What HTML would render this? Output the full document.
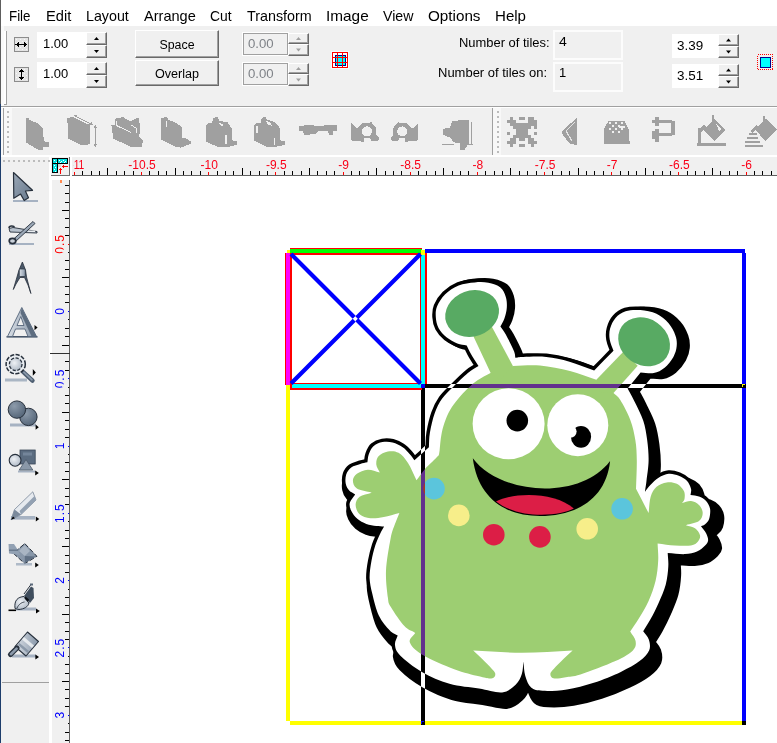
<!DOCTYPE html><html><head><meta charset="utf-8"><title>Tiler</title><style>html,body{margin:0;padding:0;background:#f0f0f0;}
body{width:777px;height:743px;overflow:hidden;font-family:"Liberation Sans",sans-serif;}
#app{position:relative;width:777px;height:743px;background:#f0f0f0;overflow:hidden;}
#app div,#app span{position:absolute;box-sizing:border-box;white-space:nowrap;}
#cv{position:absolute;left:0;top:0;}
.menubar{left:0;top:0;width:777px;height:26px;background:#fff;}
.mi{top:6px;font-size:15px;line-height:18px;color:#000;transform-origin:0 50%;}
.edgeA{left:0;top:0;width:1px;height:104px;background:#5e5e5e;}
.edgeB{left:0;top:104px;width:1px;height:639px;background:#1d3d6b;}
.edgeW{left:1px;top:26px;width:3px;height:80px;background:#fafafa;}
.sepG{left:1px;top:106px;width:776px;height:1px;background:#a0a0a0;}
.sepW{left:1px;top:107px;width:776px;height:1px;background:#fff;}
.grip1{left:4px;top:31px;width:3px;height:74px;border-right:1px solid #a0a0a0;border-bottom:1px solid #a0a0a0;background:#fff;}
.inp{background:#fff;font-size:12px;line-height:14px;color:#000;}
.inp span{left:7px;}
.lbl{font-size:12px;line-height:14px;color:#000;transform-origin:100% 50%;}
.btn{background:#f0f0f0;border-top:1px solid #fff;border-left:1px solid #fff;border-right:1px solid #696969;border-bottom:1px solid #696969;font-size:12px;line-height:14px;text-align:center;}
.btn:after{content:"";position:absolute;left:0;top:0;right:0;bottom:0;border-right:1px solid #a0a0a0;border-bottom:1px solid #a0a0a0;}
.btn span{left:0;width:100%;text-align:center;transform-origin:50% 50%;}
.sp{background:#f0f0f0;border-top:1px solid #fff;border-left:1px solid #fff;border-right:1px solid #696969;border-bottom:1px solid #696969;}
.sp:after{content:"";position:absolute;left:0;top:0;right:0;bottom:0;border-right:1px solid #a0a0a0;border-bottom:1px solid #a0a0a0;}
.dis{background:#f0f0f0;border:1px solid #a0a0a0;outline:1px solid #fff;font-size:12px;line-height:14px;color:#7f8388;}
.dsp{background:#f0f0f0;border-top:1px solid #fff;border-left:1px solid #fff;border-right:1px solid #a0a0a0;border-bottom:1px solid #a0a0a0;}
.fld{background:#f0f0f0;border:2px solid #fcfcfc;font-size:12px;line-height:14px;color:#000;}
</style></head><body>
<div id="app">
<div class="menubar"></div>
<span class="mi" style="left:8.7px;top:7.0px;font-size:15px;transform:scaleX(0.8895);transform-origin:0 50%;">File</span>
<span class="mi" style="left:45.9px;top:7.0px;font-size:15px;transform:scaleX(0.9784);transform-origin:0 50%;">Edit</span>
<span class="mi" style="left:85.8px;top:7.0px;font-size:15px;transform:scaleX(0.9501);transform-origin:0 50%;">Layout</span>
<span class="mi" style="left:143.5px;top:7.0px;font-size:15px;transform:scaleX(0.9705);transform-origin:0 50%;">Arrange</span>
<span class="mi" style="left:210.2px;top:7.0px;font-size:15px;transform:scaleX(0.9253);transform-origin:0 50%;">Cut</span>
<span class="mi" style="left:246.5px;top:7.0px;font-size:15px;transform:scaleX(0.9543);transform-origin:0 50%;">Transform</span>
<span class="mi" style="left:326.3px;top:7.0px;font-size:15px;transform:scaleX(1.0239);transform-origin:0 50%;">Image</span>
<span class="mi" style="left:382.5px;top:7.0px;font-size:15px;transform:scaleX(0.9457);transform-origin:0 50%;">View</span>
<span class="mi" style="left:428.0px;top:7.0px;font-size:15px;transform:scaleX(1.0154);transform-origin:0 50%;">Options</span>
<span class="mi" style="left:494.5px;top:7.0px;font-size:15px;transform:scaleX(1.0046);transform-origin:0 50%;">Help</span>
<div class="edgeW"></div>
<div class="sepG"></div><div class="sepW"></div>
<div class="grip1"></div>
<div class="inp" style="left:37px;top:32px;width:49px;height:26px"><span style="left:6px;top:5px;transform:scaleX(1.08);transform-origin:0 50%">1.00</span></div>
<div class="inp" style="left:37px;top:62px;width:49px;height:26px"><span style="left:6px;top:5px;transform:scaleX(1.08);transform-origin:0 50%">1.00</span></div>
<div class="sp" style="left:86px;top:32px;width:21px;height:13px"><svg width="21" height="13" style="position:absolute;left:0;top:0"><path d="M7.0 7.0 l5 0 l-2.5 -3 z" fill="#000"/></svg></div><div class="sp" style="left:86px;top:45px;width:21px;height:13px"><svg width="21" height="13" style="position:absolute;left:0;top:0"><path d="M7.0 4.0 l5 0 l-2.5 3 z" fill="#000"/></svg></div>
<div class="sp" style="left:86px;top:62px;width:21px;height:13px"><svg width="21" height="13" style="position:absolute;left:0;top:0"><path d="M7.0 7.0 l5 0 l-2.5 -3 z" fill="#000"/></svg></div><div class="sp" style="left:86px;top:75px;width:21px;height:13px"><svg width="21" height="13" style="position:absolute;left:0;top:0"><path d="M7.0 4.0 l5 0 l-2.5 3 z" fill="#000"/></svg></div>
<div class="btn" style="left:135px;top:30px;width:84px;height:28px"><span style="top:7px;transform:scaleX(1.03)">Space</span></div>
<div class="btn" style="left:135px;top:60px;width:84px;height:26px"><span style="top:6px;transform:scaleX(1.05)">Overlap</span></div>
<div class="dis" style="left:243px;top:33px;width:45px;height:22px"><span style="left:4px;top:2.5px;transform:scaleX(1.1);transform-origin:0 50%">0.00</span></div>
<div class="dis" style="left:243px;top:63px;width:45px;height:22px"><span style="left:4px;top:3px;transform:scaleX(1.1);transform-origin:0 50%">0.00</span></div>
<div class="sp" style="left:288px;top:33px;width:21px;height:11px"><svg width="21" height="11" style="position:absolute;left:0;top:0"><path d="M7.0 6.0 l5 0 l-2.5 -3 z" fill="#a0a0a0"/></svg></div><div class="sp" style="left:288px;top:44px;width:21px;height:12px"><svg width="21" height="12" style="position:absolute;left:0;top:0"><path d="M7.0 3.5 l5 0 l-2.5 3 z" fill="#a0a0a0"/></svg></div>
<div class="sp" style="left:288px;top:63px;width:21px;height:11px"><svg width="21" height="11" style="position:absolute;left:0;top:0"><path d="M7.0 6.0 l5 0 l-2.5 -3 z" fill="#a0a0a0"/></svg></div><div class="sp" style="left:288px;top:74px;width:21px;height:12px"><svg width="21" height="12" style="position:absolute;left:0;top:0"><path d="M7.0 3.5 l5 0 l-2.5 3 z" fill="#a0a0a0"/></svg></div>
<span class="lbl" style="left:458.8px;top:36.0px;font-size:12px;transform:scaleX(1.0782);transform-origin:0 50%;">Number of tiles:</span>
<span class="lbl" style="left:438.4px;top:66.0px;font-size:12px;transform:scaleX(1.0822);transform-origin:0 50%;">Number of tiles on:</span>
<div class="fld" style="left:553px;top:30px;width:70px;height:30px"><span style="left:3.5px;top:2.5px;font-size:13px;transform:scaleX(1.08);transform-origin:0 50%">4</span></div>
<div class="fld" style="left:553px;top:62px;width:70px;height:30px"><span style="left:4px;top:1.5px;font-size:13px">1</span></div>
<div class="inp" style="left:672px;top:34px;width:46px;height:24px"><span style="left:5px;top:5px;transform:scaleX(1.12);transform-origin:0 50%">3.39</span></div>
<div class="inp" style="left:672px;top:64px;width:46px;height:24px"><span style="left:5px;top:5px;transform:scaleX(1.12);transform-origin:0 50%">3.51</span></div>
<div class="sp" style="left:718px;top:34px;width:21px;height:12px"><svg width="21" height="12" style="position:absolute;left:0;top:0"><path d="M7.0 6.5 l5 0 l-2.5 -3 z" fill="#000"/></svg></div><div class="sp" style="left:718px;top:46px;width:21px;height:12px"><svg width="21" height="12" style="position:absolute;left:0;top:0"><path d="M7.0 3.5 l5 0 l-2.5 3 z" fill="#000"/></svg></div>
<div class="sp" style="left:718px;top:64px;width:21px;height:12px"><svg width="21" height="12" style="position:absolute;left:0;top:0"><path d="M7.0 6.5 l5 0 l-2.5 -3 z" fill="#000"/></svg></div><div class="sp" style="left:718px;top:76px;width:21px;height:12px"><svg width="21" height="12" style="position:absolute;left:0;top:0"><path d="M7.0 3.5 l5 0 l-2.5 3 z" fill="#000"/></svg></div>
<div class="edgeA"></div><div class="edgeB"></div>
<svg id="cv" width="777" height="743" viewBox="0 0 777 743">
<rect x="1" y="155" width="776" height="2" fill="#fff"/>
<rect x="49" y="155" width="728" height="588" fill="#fff"/>
<rect x="51" y="157" width="19" height="19" fill="#f0f0f0"/>
<rect x="69" y="157" width="1" height="19" fill="#707070"/><rect x="51" y="175" width="19" height="1" fill="#707070"/>
<rect x="72" y="157" width="705" height="19" fill="#f0f0f0"/>
<rect x="72" y="175" width="705" height="1" fill="#606060"/>
<rect x="52" y="180" width="18" height="563" fill="#f0f0f0"/>
<rect x="69" y="180" width="1" height="563" fill="#606060"/>
<rect x="74" y="172" width="1" height="3" fill="#ff0000"/>
<rect x="82" y="171" width="1" height="4" fill="#000"/>
<rect x="91" y="171" width="1" height="4" fill="#000"/>
<rect x="99" y="171" width="1" height="4" fill="#000"/>
<rect x="107" y="168" width="1" height="7" fill="#000"/>
<rect x="116" y="171" width="1" height="4" fill="#000"/>
<rect x="124" y="171" width="1" height="4" fill="#000"/>
<rect x="133" y="171" width="1" height="4" fill="#000"/>
<rect x="141" y="172" width="1" height="3" fill="#ff0000"/>
<rect x="149" y="171" width="1" height="4" fill="#000"/>
<rect x="158" y="171" width="1" height="4" fill="#000"/>
<rect x="166" y="171" width="1" height="4" fill="#000"/>
<rect x="175" y="168" width="1" height="7" fill="#000"/>
<rect x="183" y="171" width="1" height="4" fill="#000"/>
<rect x="191" y="171" width="1" height="4" fill="#000"/>
<rect x="200" y="171" width="1" height="4" fill="#000"/>
<rect x="208" y="172" width="1" height="3" fill="#ff0000"/>
<rect x="217" y="171" width="1" height="4" fill="#000"/>
<rect x="225" y="171" width="1" height="4" fill="#000"/>
<rect x="233" y="171" width="1" height="4" fill="#000"/>
<rect x="242" y="168" width="1" height="7" fill="#000"/>
<rect x="250" y="171" width="1" height="4" fill="#000"/>
<rect x="259" y="171" width="1" height="4" fill="#000"/>
<rect x="267" y="171" width="1" height="4" fill="#000"/>
<rect x="275" y="172" width="1" height="3" fill="#ff0000"/>
<rect x="284" y="171" width="1" height="4" fill="#000"/>
<rect x="292" y="171" width="1" height="4" fill="#000"/>
<rect x="301" y="171" width="1" height="4" fill="#000"/>
<rect x="309" y="168" width="1" height="7" fill="#000"/>
<rect x="317" y="171" width="1" height="4" fill="#000"/>
<rect x="326" y="171" width="1" height="4" fill="#000"/>
<rect x="334" y="171" width="1" height="4" fill="#000"/>
<rect x="343" y="172" width="1" height="3" fill="#ff0000"/>
<rect x="351" y="171" width="1" height="4" fill="#000"/>
<rect x="359" y="171" width="1" height="4" fill="#000"/>
<rect x="368" y="171" width="1" height="4" fill="#000"/>
<rect x="376" y="168" width="1" height="7" fill="#000"/>
<rect x="385" y="171" width="1" height="4" fill="#000"/>
<rect x="393" y="171" width="1" height="4" fill="#000"/>
<rect x="401" y="171" width="1" height="4" fill="#000"/>
<rect x="410" y="172" width="1" height="3" fill="#ff0000"/>
<rect x="418" y="171" width="1" height="4" fill="#000"/>
<rect x="426" y="171" width="1" height="4" fill="#000"/>
<rect x="435" y="171" width="1" height="4" fill="#000"/>
<rect x="443" y="168" width="1" height="7" fill="#000"/>
<rect x="452" y="171" width="1" height="4" fill="#000"/>
<rect x="460" y="171" width="1" height="4" fill="#000"/>
<rect x="468" y="171" width="1" height="4" fill="#000"/>
<rect x="477" y="172" width="1" height="3" fill="#ff0000"/>
<rect x="485" y="171" width="1" height="4" fill="#000"/>
<rect x="494" y="171" width="1" height="4" fill="#000"/>
<rect x="502" y="171" width="1" height="4" fill="#000"/>
<rect x="510" y="168" width="1" height="7" fill="#000"/>
<rect x="519" y="171" width="1" height="4" fill="#000"/>
<rect x="527" y="171" width="1" height="4" fill="#000"/>
<rect x="536" y="171" width="1" height="4" fill="#000"/>
<rect x="544" y="172" width="1" height="3" fill="#ff0000"/>
<rect x="552" y="171" width="1" height="4" fill="#000"/>
<rect x="561" y="171" width="1" height="4" fill="#000"/>
<rect x="569" y="171" width="1" height="4" fill="#000"/>
<rect x="578" y="168" width="1" height="7" fill="#000"/>
<rect x="586" y="171" width="1" height="4" fill="#000"/>
<rect x="594" y="171" width="1" height="4" fill="#000"/>
<rect x="603" y="171" width="1" height="4" fill="#000"/>
<rect x="611" y="172" width="1" height="3" fill="#ff0000"/>
<rect x="620" y="171" width="1" height="4" fill="#000"/>
<rect x="628" y="171" width="1" height="4" fill="#000"/>
<rect x="636" y="171" width="1" height="4" fill="#000"/>
<rect x="645" y="168" width="1" height="7" fill="#000"/>
<rect x="653" y="171" width="1" height="4" fill="#000"/>
<rect x="662" y="171" width="1" height="4" fill="#000"/>
<rect x="670" y="171" width="1" height="4" fill="#000"/>
<rect x="678" y="172" width="1" height="3" fill="#ff0000"/>
<rect x="687" y="171" width="1" height="4" fill="#000"/>
<rect x="695" y="171" width="1" height="4" fill="#000"/>
<rect x="704" y="171" width="1" height="4" fill="#000"/>
<rect x="712" y="168" width="1" height="7" fill="#000"/>
<rect x="720" y="171" width="1" height="4" fill="#000"/>
<rect x="729" y="171" width="1" height="4" fill="#000"/>
<rect x="737" y="171" width="1" height="4" fill="#000"/>
<rect x="746" y="172" width="1" height="3" fill="#ff0000"/>
<rect x="754" y="171" width="1" height="4" fill="#000"/>
<rect x="762" y="171" width="1" height="4" fill="#000"/>
<rect x="771" y="171" width="1" height="4" fill="#000"/>
<clipPath id="hrc"><rect x="73.6" y="157" width="705" height="18"/></clipPath>
<g clip-path="url(#hrc)" font-family="Liberation Sans" font-size="12" fill="#fa0018">
<text transform="translate(70.2 169) scale(0.86 1)">-11</text>
<text x="142.0" y="169" text-anchor="middle">-10.5</text>
<text x="209.2" y="169" text-anchor="middle">-10</text>
<text x="276.3" y="169" text-anchor="middle">-9.5</text>
<text x="343.5" y="169" text-anchor="middle">-9</text>
<text x="410.7" y="169" text-anchor="middle">-8.5</text>
<text x="477.9" y="169" text-anchor="middle">-8</text>
<text x="545.1" y="169" text-anchor="middle">-7.5</text>
<text x="612.2" y="169" text-anchor="middle">-7</text>
<text x="679.4" y="169" text-anchor="middle">-6.5</text>
<text x="746.6" y="169" text-anchor="middle">-6</text>
</g>
<rect x="65" y="185" width="4" height="1" fill="#000"/>
<rect x="65" y="193" width="4" height="1" fill="#000"/>
<rect x="65" y="202" width="4" height="1" fill="#000"/>
<rect x="62" y="210" width="7" height="1" fill="#000"/>
<rect x="65" y="218" width="4" height="1" fill="#000"/>
<rect x="65" y="227" width="4" height="1" fill="#000"/>
<rect x="65" y="235" width="4" height="1" fill="#000"/>
<rect x="68" y="244" width="1" height="1" fill="#ff0000"/>
<rect x="68" y="252" width="1" height="1" fill="#000"/>
<rect x="65" y="260" width="4" height="1" fill="#000"/>
<rect x="65" y="269" width="4" height="1" fill="#000"/>
<rect x="62" y="277" width="7" height="1" fill="#000"/>
<rect x="65" y="286" width="4" height="1" fill="#000"/>
<rect x="65" y="294" width="4" height="1" fill="#000"/>
<rect x="65" y="302" width="4" height="1" fill="#000"/>
<rect x="68" y="311" width="1" height="1" fill="#0000ff"/>
<rect x="68" y="319" width="1" height="1" fill="#000"/>
<rect x="65" y="328" width="4" height="1" fill="#000"/>
<rect x="65" y="336" width="4" height="1" fill="#000"/>
<rect x="62" y="345" width="7" height="1" fill="#000"/>
<rect x="65" y="353" width="4" height="1" fill="#000"/>
<rect x="65" y="361" width="4" height="1" fill="#000"/>
<rect x="65" y="370" width="4" height="1" fill="#000"/>
<rect x="68" y="378" width="1" height="1" fill="#0000ff"/>
<rect x="68" y="387" width="1" height="1" fill="#000"/>
<rect x="65" y="395" width="4" height="1" fill="#000"/>
<rect x="65" y="403" width="4" height="1" fill="#000"/>
<rect x="62" y="412" width="7" height="1" fill="#000"/>
<rect x="65" y="420" width="4" height="1" fill="#000"/>
<rect x="65" y="429" width="4" height="1" fill="#000"/>
<rect x="65" y="437" width="4" height="1" fill="#000"/>
<rect x="68" y="446" width="1" height="1" fill="#0000ff"/>
<rect x="68" y="454" width="1" height="1" fill="#000"/>
<rect x="65" y="462" width="4" height="1" fill="#000"/>
<rect x="65" y="471" width="4" height="1" fill="#000"/>
<rect x="62" y="479" width="7" height="1" fill="#000"/>
<rect x="65" y="488" width="4" height="1" fill="#000"/>
<rect x="65" y="496" width="4" height="1" fill="#000"/>
<rect x="65" y="504" width="4" height="1" fill="#000"/>
<rect x="68" y="513" width="1" height="1" fill="#0000ff"/>
<rect x="68" y="521" width="1" height="1" fill="#000"/>
<rect x="65" y="530" width="4" height="1" fill="#000"/>
<rect x="65" y="538" width="4" height="1" fill="#000"/>
<rect x="62" y="546" width="7" height="1" fill="#000"/>
<rect x="65" y="555" width="4" height="1" fill="#000"/>
<rect x="65" y="563" width="4" height="1" fill="#000"/>
<rect x="65" y="572" width="4" height="1" fill="#000"/>
<rect x="68" y="580" width="1" height="1" fill="#0000ff"/>
<rect x="68" y="589" width="1" height="1" fill="#000"/>
<rect x="65" y="597" width="4" height="1" fill="#000"/>
<rect x="65" y="605" width="4" height="1" fill="#000"/>
<rect x="62" y="614" width="7" height="1" fill="#000"/>
<rect x="65" y="622" width="4" height="1" fill="#000"/>
<rect x="65" y="631" width="4" height="1" fill="#000"/>
<rect x="65" y="639" width="4" height="1" fill="#000"/>
<rect x="68" y="647" width="1" height="1" fill="#0000ff"/>
<rect x="68" y="656" width="1" height="1" fill="#000"/>
<rect x="65" y="664" width="4" height="1" fill="#000"/>
<rect x="65" y="673" width="4" height="1" fill="#000"/>
<rect x="62" y="681" width="7" height="1" fill="#000"/>
<rect x="65" y="689" width="4" height="1" fill="#000"/>
<rect x="65" y="698" width="4" height="1" fill="#000"/>
<rect x="65" y="706" width="4" height="1" fill="#000"/>
<rect x="68" y="715" width="1" height="1" fill="#0000ff"/>
<rect x="68" y="723" width="1" height="1" fill="#000"/>
<rect x="65" y="732" width="4" height="1" fill="#000"/>
<rect x="65" y="740" width="4" height="1" fill="#000"/>
<g font-family="Liberation Sans" font-size="12" letter-spacing="1">
<text transform="translate(64 243.9) rotate(-90)" text-anchor="middle" fill="#ff0000">0.5</text>
<rect x="62" y="249.7" width="4" height="2.6" fill="#f0f0f0"/>
<text transform="translate(64 310.8) rotate(-90)" text-anchor="middle" fill="#0000ff">0</text>
<text transform="translate(64 378.5) rotate(-90)" text-anchor="middle" fill="#0000ff">0.5</text>
<rect x="62" y="384.3" width="4" height="2.6" fill="#f0f0f0"/>
<text transform="translate(64 445.4) rotate(-90)" text-anchor="middle" fill="#0000ff">1</text>
<text transform="translate(64 513.1) rotate(-90)" text-anchor="middle" fill="#0000ff">1.5</text>
<text transform="translate(64 580.0) rotate(-90)" text-anchor="middle" fill="#0000ff">2</text>
<text transform="translate(64 647.7) rotate(-90)" text-anchor="middle" fill="#0000ff">2.5</text>
<text transform="translate(64 714.6) rotate(-90)" text-anchor="middle" fill="#0000ff">3</text>
</g>
<rect x="50" y="353" width="20" height="1" fill="#303030"/>
<rect x="60" y="180" width="2" height="3" fill="#ff8a50"/>
<defs><g id="ms"><path d="M512.9 365.9C521.9 365.8 530.5 364.6 540.0 365.5C549.5 366.4 560.6 368.6 570.0 371.0C579.4 373.4 587.5 376.9 596.3 379.8C602.0 384.2 607.8 388.6 613.5 393.0C615.8 395.3 617.5 395.5 620.3 400.0C623.1 404.5 627.9 413.5 630.4 420.2C632.9 426.9 634.3 433.7 635.4 440.4C636.5 447.1 636.7 452.5 636.8 460.6C636.9 468.7 636.3 479.4 636.0 488.8C640.2 496.9 644.4 505.0 648.6 513.1C649.3 507.7 649.3 501.3 650.6 496.9C651.9 492.5 653.9 489.2 656.6 486.8C659.3 484.4 663.3 482.9 666.7 482.4C670.1 481.9 673.9 482.4 676.8 483.8C679.7 485.2 682.6 488.4 683.9 490.9C685.2 493.4 684.8 496.9 684.5 498.9C684.2 500.9 682.8 501.6 681.9 503.0C684.9 502.3 688.1 500.7 691.0 501.0C693.9 501.3 697.0 503.0 699.0 505.0C701.0 507.0 702.7 510.4 702.7 513.1C702.7 515.8 701.8 519.1 699.0 521.1C696.2 523.1 690.3 523.8 685.9 525.2C688.9 526.2 692.6 526.6 695.0 528.3C697.4 530.0 699.5 533.1 700.0 535.3C700.5 537.5 699.5 539.7 698.0 541.4C696.5 543.1 694.9 544.7 691.0 545.4C687.1 546.1 680.4 545.7 674.8 545.4C669.2 545.1 663.3 544.1 657.6 543.4C657.8 549.1 658.5 554.4 658.2 560.6C657.9 566.8 657.2 574.1 655.6 580.8C654.0 587.5 651.5 594.6 648.6 601.0C645.8 607.4 641.6 614.0 638.5 619.1C635.4 624.2 633.0 627.4 630.2 631.5C632.0 634.7 635.2 637.9 635.6 641.0C636.0 644.1 636.3 647.0 632.9 650.4C629.5 653.8 624.1 657.1 615.4 661.1C606.6 665.1 588.7 671.9 580.4 674.6C572.1 677.3 569.9 676.5 565.8 677.2C561.7 677.9 558.3 678.6 556.0 678.6C553.7 678.6 552.7 678.1 551.8 677.4C550.9 676.7 550.4 675.6 550.4 674.5C550.4 673.4 550.2 673.0 552.0 670.8C553.8 668.6 557.6 664.9 561.0 661.5C564.4 658.1 568.7 654.2 572.6 650.5C555.7 651.3 538.6 652.8 522.0 652.8C505.4 652.8 489.5 651.3 473.2 650.5C477.0 654.2 481.3 658.1 484.7 661.5C488.1 664.9 491.8 668.6 493.6 670.8C495.4 673.0 495.3 673.5 495.3 674.6C495.3 675.7 494.9 676.9 493.8 677.5C492.8 678.1 491.5 678.7 489.0 678.5C486.5 678.3 484.8 677.8 479.0 676.3C473.2 674.8 463.7 672.9 454.2 669.2C444.7 665.6 429.3 658.9 421.9 654.4C414.5 649.9 410.9 645.9 409.8 642.3C408.7 638.7 413.4 636.0 415.2 632.9C411.6 630.6 408.4 630.4 404.4 626.1C400.4 621.8 393.8 612.0 391.0 607.3C388.2 602.6 388.7 603.8 387.9 597.7C387.1 591.6 385.6 580.6 386.0 570.7C386.4 560.8 389.2 546.0 390.6 538.4C392.0 530.8 393.1 529.2 394.6 525.0C396.1 520.8 397.8 516.9 399.4 512.9C394.2 514.2 388.6 516.0 383.8 516.9C379.0 517.8 374.4 518.7 370.4 518.2C366.4 517.8 362.1 516.4 359.6 514.2C357.1 512.0 355.6 507.7 355.6 504.8C355.6 501.9 356.9 498.7 359.6 496.7C362.3 494.7 367.7 494.0 371.7 492.7C366.8 491.3 360.0 490.6 356.9 488.6C353.8 486.6 352.9 483.1 352.9 480.6C352.9 478.1 354.4 475.6 356.9 473.8C359.4 472.0 363.9 470.0 367.7 469.8C371.5 469.6 375.8 471.6 379.8 472.5C378.6 469.8 376.5 467.1 376.3 464.4C376.1 461.7 376.6 458.4 378.5 456.3C380.4 454.2 384.5 452.1 387.9 451.5C391.2 450.9 395.2 450.9 398.6 452.8C402.0 454.7 405.0 458.4 408.0 463.0C411.0 467.6 413.7 474.5 416.5 480.2C419.1 476.8 421.6 473.0 424.2 469.9C426.8 466.8 429.9 464.2 432.3 461.8C434.7 459.4 436.6 457.5 438.8 455.3C439.1 453.7 439.2 453.7 439.6 450.5C440.0 447.3 440.4 440.5 441.2 435.9C442.0 431.3 442.9 427.3 444.4 423.0C445.9 418.7 447.8 414.1 450.1 410.1C452.4 406.1 455.2 402.4 458.2 398.8C461.2 395.2 464.7 391.4 467.9 388.3C471.1 385.2 473.7 382.8 477.5 380.2C481.3 377.6 486.2 375.3 490.5 372.9C498.0 370.6 505.4 368.2 512.9 365.9Z"/>
<polygon points="473.5,336.6 491.7,326.5 512.9,365.9 500,380 490.7,373"/>
<polygon points="623.6,351.6 637.7,365.7 613.5,393 600,392 596.3,379.8"/>
<ellipse cx="472.1" cy="313.5" rx="26" ry="21.5" transform="rotate(-20 472.1 313.5)"/>
<ellipse cx="644.1" cy="341.8" rx="26" ry="22" transform="rotate(35 644.1 341.8)"/></g><path id="mw" d="M474.8 282.4C479.8 281.9 484.0 281.9 488.3 282.8C492.6 283.7 497.5 285.1 500.4 287.5C503.3 289.9 504.7 293.5 505.8 296.9C506.9 300.3 507.0 304.1 506.8 307.7C506.6 311.3 505.5 315.3 504.4 318.4C503.3 321.5 501.7 323.8 500.4 326.5C502.2 329.2 503.6 330.6 505.8 334.6C508.0 338.7 512.2 346.9 513.8 350.8C515.4 354.7 514.9 355.5 515.4 357.8C518.0 357.5 518.1 357.1 523.2 357.0C528.4 356.9 538.6 356.2 546.3 357.0C554.0 357.8 561.5 359.4 569.5 361.7C577.5 363.9 586.0 367.6 594.2 370.5C600.6 363.9 607.1 357.4 613.5 350.8C612.2 347.0 610.3 343.1 609.7 339.4C609.1 335.7 609.1 332.2 610.1 328.6C611.1 325.0 612.9 320.8 615.5 317.9C618.1 315.0 621.5 312.5 625.6 311.2C629.8 309.9 635.2 309.7 640.4 310.1C645.5 310.5 651.8 311.6 656.5 313.8C661.2 316.0 665.5 319.7 668.6 323.3C671.8 326.9 674.0 331.6 675.4 335.4C676.8 339.2 677.0 342.5 676.7 346.1C676.4 349.7 675.4 353.3 673.4 356.9C671.4 360.5 667.9 365.0 664.6 367.7C661.3 370.4 657.8 372.3 653.8 373.1C649.8 373.9 645.0 372.6 640.6 372.4C636.3 377.8 631.9 383.1 627.6 388.5C629.9 392.8 631.9 396.1 634.5 401.5C637.1 406.9 641.1 414.2 643.2 420.6C645.3 427.1 646.3 433.5 647.2 440.2C648.1 446.9 648.7 453.8 648.6 460.6C648.5 467.4 647.1 475.6 646.5 480.8C645.9 486.0 645.4 488.2 644.9 491.9C646.8 489.5 648.3 487.2 650.6 484.8C652.9 482.4 655.6 479.6 658.6 477.7C661.6 475.8 665.3 474.0 668.7 473.7C672.1 473.4 675.8 474.5 678.8 475.7C681.8 476.9 684.9 478.6 686.9 480.8C688.9 483.0 690.4 486.5 691.0 488.8C691.6 491.1 690.7 492.9 690.5 494.9C693.3 495.4 696.4 495.5 699.0 496.5C701.6 497.5 704.2 498.9 706.1 501.0C708.0 503.1 709.6 506.0 710.1 509.0C710.6 512.0 709.9 516.6 709.1 519.1C708.3 521.6 706.5 523.0 705.1 524.2C703.8 525.4 702.4 525.5 701.0 526.2C702.7 528.6 704.9 530.9 706.1 533.3C707.3 535.7 708.3 538.4 708.1 540.4C707.9 542.4 707.0 543.5 705.1 545.4C703.2 547.2 700.4 550.0 697.0 551.5C693.6 553.0 689.8 553.9 684.9 554.1C680.0 554.3 673.4 553.3 667.7 552.9C667.9 557.5 668.6 561.3 668.3 566.6C668.0 571.9 667.3 578.7 665.7 584.8C664.1 590.9 661.1 597.3 658.6 603.0C656.1 608.7 653.2 614.4 650.6 619.1C648.0 623.8 645.7 627.2 643.2 631.3C645.1 634.0 647.8 636.4 648.8 639.5C649.8 642.6 650.7 646.6 649.2 650.2C647.7 653.8 644.3 657.5 639.6 661.1C634.9 664.7 628.4 668.3 620.8 671.9C613.2 675.5 602.8 679.8 593.8 682.7C584.8 685.6 575.4 688.0 566.9 689.4C558.4 690.8 548.7 691.1 542.7 690.8C536.7 690.5 534.0 690.1 531.1 687.6C528.2 685.1 526.6 680.4 525.3 676.0C524.0 671.6 524.0 666.3 523.4 661.5C522.9 665.7 523.1 670.2 521.8 674.1C520.5 678.0 518.9 681.7 515.6 684.7C512.3 687.8 508.2 691.8 502.1 692.4C496.0 693.0 487.8 689.9 479.0 688.5C470.2 687.1 459.0 686.6 449.5 683.8C440.0 681.0 430.1 676.6 421.9 671.9C413.7 667.2 404.9 660.2 400.4 655.7C395.9 651.2 395.4 648.4 395.0 645.0C394.6 641.6 396.8 638.7 397.7 635.6C395.0 633.8 392.8 633.6 389.6 630.2C386.5 626.8 381.7 621.5 378.8 615.4C375.9 609.3 373.8 600.0 372.3 593.8C370.8 587.6 369.8 583.4 369.6 578.0C369.5 572.6 370.4 566.7 371.4 561.2C372.4 555.7 373.9 549.8 375.4 545.1C376.9 540.4 379.1 536.1 380.5 533.0C381.9 529.9 382.9 528.7 384.1 526.5C381.5 526.3 379.4 526.3 376.4 525.9C373.4 525.5 369.5 525.1 366.3 523.9C363.1 522.7 359.8 521.0 357.3 518.8C354.8 516.6 352.4 513.5 351.2 510.8C349.9 508.1 349.1 505.4 349.8 502.7C350.5 500.0 353.4 497.2 355.2 494.4C353.2 493.1 350.8 492.4 349.2 490.6C347.6 488.8 346.2 486.2 345.7 483.5C345.2 480.8 345.3 477.1 346.2 474.4C347.1 471.7 348.8 469.1 351.2 467.4C353.6 465.6 357.6 464.8 360.3 463.9C363.0 463.0 365.0 462.8 367.4 462.3C367.9 459.6 367.8 456.9 368.8 454.2C369.8 451.5 371.1 448.2 373.4 446.2C375.7 444.2 379.3 442.7 382.5 442.1C385.7 441.5 389.2 441.6 392.6 442.5C396.0 443.4 399.8 445.2 402.7 447.2C405.6 449.1 407.9 452.0 409.8 454.2C411.8 456.4 412.9 458.3 414.4 460.3C419.2 455.9 424.1 451.6 428.9 447.2C429.2 442.4 428.9 438.3 429.9 432.7C430.9 427.1 432.7 418.9 434.7 413.3C436.7 407.7 438.9 403.2 442.0 398.8C445.1 394.4 449.0 391.0 453.3 386.7C457.6 382.4 463.7 376.3 467.9 372.9C472.1 369.4 475.0 368.3 478.5 366.0C476.4 362.7 474.1 359.5 472.1 356.1C470.1 352.7 468.5 349.0 466.7 345.4C463.6 344.7 460.7 344.8 457.3 343.4C453.9 342.0 449.6 339.9 446.5 337.3C443.4 334.7 440.3 331.3 438.5 327.9C436.7 324.5 436.0 320.7 435.8 317.1C435.6 313.5 435.5 310.1 437.1 306.3C438.7 302.5 441.6 297.7 445.2 294.2C448.8 290.7 453.7 287.5 458.6 285.5C463.5 283.5 469.9 282.8 474.8 282.4Z"/></defs>
<g stroke-linejoin="round" stroke-linecap="round">
<g transform="translate(343 300) scale(1.0284 1.033) translate(-343 -300)"><use href="#mw" fill="#000" stroke="#000" stroke-width="7"/></g>
<use href="#mw" fill="#fff" stroke="#000" stroke-width="7" style="paint-order:stroke"/>
</g>
<use href="#ms" fill="#9dce72"/>
<ellipse cx="472.1" cy="313.5" rx="27.4" ry="22.9" transform="rotate(-20 472.1 313.5)" fill="#58aa63"/>
<ellipse cx="644.1" cy="341.8" rx="27.2" ry="23.1" transform="rotate(35 644.1 341.8)" fill="#58aa63"/>
<ellipse cx="508.6" cy="423.8" rx="36" ry="35.5" fill="#fff"/>
<circle cx="517.3" cy="420.6" r="10.8" fill="#000"/>
<ellipse cx="577.8" cy="425.2" rx="30.5" ry="31" fill="#fff"/>
<ellipse cx="581" cy="436.8" rx="10.1" ry="10.9" fill="#000"/>
<circle cx="570.4" cy="431.6" r="6.2" fill="#fff"/>
<path d="M472.8 458.3 C500 495 580 501 610.1 461 C606 500 575 516 540 516 C505 516 478 498 472.8 458.3Z" fill="#000"/>
<path d="M496 501.4 C515 492 555 492 573.8 508.6 C560 516 520 520 496 501.4Z" fill="#dc1e46"/>
<circle cx="434.0" cy="488.6" r="10.8" fill="#5bc5dc"/>
<circle cx="458.8" cy="515.4" r="10.8" fill="#f7ee8a"/>
<circle cx="493.8" cy="534.7" r="10.8" fill="#dc1e46"/>
<circle cx="539.9" cy="536.9" r="10.8" fill="#dc1e46"/>
<circle cx="587.2" cy="528.8" r="10.8" fill="#f7ee8a"/>
<circle cx="622.1" cy="508.8" r="10.8" fill="#5bc5dc"/>
<g shape-rendering="crispEdges">
<g style="mix-blend-mode:difference" fill="#fff">
<rect x="425" y="384" width="321" height="4"/>
<rect x="421" y="388" width="4" height="337"/>
</g>
<rect x="425" y="249" width="320" height="4" fill="#0000ff"/>
<rect x="742" y="253" width="4" height="131" fill="#0000ff"/>
<rect x="742" y="388" width="4" height="333" fill="#0000ff"/>
<rect x="286" y="384" width="4" height="337" fill="#ffff00"/>
<rect x="290" y="721" width="131" height="4" fill="#ffff00"/>
<rect x="425" y="721" width="317" height="4" fill="#ffff00"/>
<rect x="742" y="721" width="4" height="4" fill="#000"/>
<rect x="290" y="248" width="132" height="7" fill="#ff0000"/>
<rect x="290" y="249" width="132" height="4" fill="#00ff00"/>
<rect x="285" y="253" width="7" height="132" fill="#ff0000"/>
<rect x="286" y="253" width="4" height="132" fill="#ff00ff"/>
<rect x="290" y="383" width="132" height="7" fill="#ff0000"/>
<rect x="292" y="384" width="130" height="4" fill="#00ffff"/>
<rect x="420" y="253" width="7" height="131" fill="#ff0000"/>
<rect x="421" y="255" width="4" height="129" fill="#00ffff"/>
<rect x="421" y="250" width="4" height="5" fill="#ffff00"/>
<rect x="421" y="384" width="4" height="4" fill="#0000ff"/>
<rect x="287" y="250" width="3" height="3" fill="#ffff00"/>
<rect x="742" y="384" width="3" height="1" fill="#ffff00"/><rect x="742" y="384" width="1" height="3" fill="#ffff00"/>
<rect x="421" y="721" width="3" height="1" fill="#0000ff"/><rect x="421" y="721" width="1" height="3" fill="#0000ff"/>
</g>
<g stroke="#0000ff" stroke-width="4.2" fill="none">
<path d="M291 254 L354.2 317.2 M356.8 319.8 L420.5 383.5"/>
<path d="M420.5 254 L356.8 317.7 M354.2 320.3 L291 383.5"/>
</g>
<rect x="1" y="108" width="11" height="47" fill="#f8f8f8"/>
<rect x="3" y="108" width="1" height="47" fill="#a0a0a0"/>
<rect x="7" y="111" width="2" height="2" fill="#bcbcbc"/>
<rect x="7" y="116" width="2" height="2" fill="#bcbcbc"/>
<rect x="7" y="121" width="2" height="2" fill="#bcbcbc"/>
<rect x="7" y="126" width="2" height="2" fill="#bcbcbc"/>
<rect x="7" y="131" width="2" height="2" fill="#bcbcbc"/>
<rect x="7" y="136" width="2" height="2" fill="#bcbcbc"/>
<rect x="7" y="141" width="2" height="2" fill="#bcbcbc"/>
<rect x="7" y="146" width="2" height="2" fill="#bcbcbc"/>
<rect x="7" y="151" width="2" height="2" fill="#bcbcbc"/>
<rect x="492" y="108" width="1" height="47" fill="#a0a0a0"/>
<rect x="493" y="108" width="8" height="47" fill="#f8f8f8"/>
<rect x="497" y="111" width="2" height="2" fill="#bcbcbc"/>
<rect x="497" y="116" width="2" height="2" fill="#bcbcbc"/>
<rect x="497" y="121" width="2" height="2" fill="#bcbcbc"/>
<rect x="497" y="126" width="2" height="2" fill="#bcbcbc"/>
<rect x="497" y="131" width="2" height="2" fill="#bcbcbc"/>
<rect x="497" y="136" width="2" height="2" fill="#bcbcbc"/>
<rect x="497" y="141" width="2" height="2" fill="#bcbcbc"/>
<rect x="497" y="146" width="2" height="2" fill="#bcbcbc"/>
<rect x="497" y="151" width="2" height="2" fill="#bcbcbc"/>
<rect x="3" y="160" width="2" height="2" fill="#bcbcbc"/>
<rect x="8" y="160" width="2" height="2" fill="#bcbcbc"/>
<rect x="13" y="160" width="2" height="2" fill="#bcbcbc"/>
<rect x="18" y="160" width="2" height="2" fill="#bcbcbc"/>
<rect x="23" y="160" width="2" height="2" fill="#bcbcbc"/>
<rect x="28" y="160" width="2" height="2" fill="#bcbcbc"/>
<rect x="33" y="160" width="2" height="2" fill="#bcbcbc"/>
<rect x="38" y="160" width="2" height="2" fill="#bcbcbc"/>
<rect x="43" y="160" width="2" height="2" fill="#bcbcbc"/>
<rect x="48" y="160" width="2" height="2" fill="#bcbcbc"/>
<g fill="#a0a0a0" stroke="none" shape-rendering="crispEdges">
<polygon points="25.5,118 28.5,118 28.5,119.5 37.5,123.3 42.9,128.7 43.8,141.3 48.7,142.2 48.7,146.7 43,147.5 42.9,149.8 38.4,149.8 25.5,142.2"/>
<polygon points="67.3,118 72.7,117 89.8,125.1 90.3,144 82.6,145.5 68.2,138.6"/>
<path d="M74 115.5 L92 124.5" stroke="#a0a0a0" stroke-width="1" fill="none"/>
<polygon points="73,115 77,115 75,117"/><polygon points="93,125 89,124.5 92,122"/>
<rect x="95" y="126" width="1" height="20"/><polygon points="93.5,128 97.5,128 95.5,125"/><polygon points="93.5,144 97.5,144 95.5,147"/>
<polygon points="111.4,125.1 115,125 115,118.8 123.1,117 130.3,121.5 134.8,118.8 138.4,117.9 140.2,126 139.3,136.8 142.9,140.4 142,146.7 132.1,147.3 113.2,138.6"/>
<path d="M116.5 120.5 L116.5 125.5 L131 132.5" stroke="#f0f0f0" stroke-width="1" fill="none"/>
<path d="M131 125 L136 128 L136 133" stroke="#f0f0f0" stroke-width="1" fill="none"/>
<polygon points="161.2,118 167.1,117 168,119.5 177,123.3 182.4,127.8 182.4,137.7 186,138.6 190.5,141.3 190.5,144 180.6,147.6 175.2,146.7 161.2,139.5"/>
<rect x="166" y="121" width="1" height="6" fill="#f0f0f0"/>
<polygon points="205.5,125.1 208.6,123.3 212.2,123.3 213.1,117.9 217.6,117 219.4,120.6 227.5,122.4 232,128.7 232,140.4 236.5,141.3 236.5,144.9 229.3,146.7 218.5,147.3 205.5,141.3"/>
<polygon points="219,123 223,124 223.5,127 221,125.5" fill="#f0f0f0"/><rect x="225" y="135" width="2" height="9" fill="#f0f0f0"/>
<polygon points="254.1,125.1 256.3,123.3 260.8,123.3 261.7,117.9 265.3,117 267.1,119.7 275.2,122.4 279.7,127.8 280.1,140.4 284.8,141.3 284.8,144.9 276.1,146.7 267.1,147.3 254.1,140.4"/>
<rect x="256" y="126" width="2" height="7" fill="#f0f0f0"/><polygon points="266,121 270,122 272,126 268,124.5" fill="#f0f0f0"/><rect x="274" y="138" width="1" height="7" fill="#f0f0f0"/>
<polygon points="299,126 303,126 305,125 312,125 316,126 322,126 326,125 337,125 337,131 333,131 333,135 329,135 328,131 318,131 316,134 304,135 303,131 299,131"/>
<path fill-rule="evenodd" d="M351.3 123.3 L357 128.7 L362.5 123.3 L371.5 122.4 L376 127.8 L376 135 L378.7 136.8 L378.7 140.4 L371.5 141.3 L369.7 137.7 L364.3 137.7 L364.3 141.9 L351.3 140.4 Z M362 131.4 a5 5 0 1 0 10 0 a5 5 0 1 0 -10 0 Z"/>
<path fill-rule="evenodd" d="M418 123.3 L412.3 128.7 L406.8 123.3 L397.8 122.4 L393.3 127.8 L393.3 135 L391.3 136.8 L391.3 140.4 L397.8 141.3 L399.6 137.7 L405 137.7 L405 141.9 L418 140.4 Z M397.3 131.4 a5 5 0 1 0 10 0 a5 5 0 1 0 -10 0 Z"/>
<polygon points="443.4,128.7 449.7,127.8 452.4,120.6 469,120.3 469,143.1 464.1,150.3 460.5,150.3 459.6,143.1 453.3,142.2 450.6,137.7 443.4,135"/>
<rect x="471" y="122" width="1" height="23"/><rect x="442" y="144" width="12" height="1"/><rect x="468" y="144" width="5" height="1"/>
<rect x="519" y="117" width="3" height="3"/>
<rect x="516" y="129" width="3" height="3"/>
<rect x="519" y="126" width="3" height="3"/>
<rect x="519" y="144" width="3" height="3"/>
<rect x="522" y="129" width="3" height="3"/>
<rect x="519" y="135" width="3" height="3"/>
<rect x="534" y="123" width="3" height="3"/>
<rect x="531" y="117" width="3" height="3"/>
<rect x="522" y="138" width="3" height="3"/>
<rect x="534" y="132" width="3" height="3"/>
<rect x="531" y="144" width="3" height="3"/>
<rect x="534" y="141" width="3" height="3"/>
<rect x="507" y="132" width="3" height="3"/>
<rect x="513" y="123" width="3" height="3"/>
<rect x="510" y="117" width="3" height="3"/>
<rect x="507" y="141" width="3" height="3"/>
<rect x="510" y="144" width="3" height="3"/>
<rect x="513" y="141" width="3" height="3"/>
<rect x="525" y="123" width="3" height="3"/>
<rect x="528" y="120" width="3" height="3"/>
<rect x="528" y="138" width="3" height="3"/>
<rect x="525" y="132" width="3" height="3"/>
<rect x="519" y="123" width="3" height="3"/>
<rect x="519" y="132" width="3" height="3"/>
<rect x="516" y="126" width="3" height="3"/>
<rect x="522" y="117" width="3" height="3"/>
<rect x="522" y="135" width="3" height="3"/>
<rect x="516" y="135" width="3" height="3"/>
<rect x="522" y="126" width="3" height="3"/>
<rect x="531" y="123" width="3" height="3"/>
<rect x="522" y="144" width="3" height="3"/>
<rect x="534" y="120" width="3" height="3"/>
<rect x="507" y="120" width="3" height="3"/>
<rect x="531" y="141" width="3" height="3"/>
<rect x="510" y="123" width="3" height="3"/>
<rect x="513" y="120" width="3" height="3"/>
<rect x="513" y="138" width="3" height="3"/>
<rect x="510" y="141" width="3" height="3"/>
<rect x="528" y="117" width="3" height="3"/>
<rect x="525" y="129" width="3" height="3"/>
<rect x="528" y="126" width="3" height="3"/>
<rect x="528" y="135" width="3" height="3"/>
<rect x="516" y="123" width="3" height="3"/>
<rect x="519" y="138" width="3" height="3"/>
<rect x="516" y="132" width="3" height="3"/>
<rect x="522" y="123" width="3" height="3"/>
<rect x="519" y="129" width="3" height="3"/>
<rect x="522" y="132" width="3" height="3"/>
<rect x="534" y="126" width="3" height="3"/>
<rect x="531" y="120" width="3" height="3"/>
<rect x="531" y="138" width="3" height="3"/>
<rect x="510" y="120" width="3" height="3"/>
<rect x="513" y="126" width="3" height="3"/>
<rect x="510" y="138" width="3" height="3"/>
<rect x="513" y="135" width="3" height="3"/>
<rect x="528" y="123" width="3" height="3"/>
<rect x="525" y="135" width="3" height="3"/>
<rect x="525" y="126" width="3" height="3"/>
<rect x="528" y="141" width="3" height="3"/>
<polygon points="562.2,131 576.6,117.9 576.6,144.9 570,144 562.2,134"/>
<path d="M575 122 L566 131 L572 141" stroke="#e4e4e4" stroke-width="1.2" fill="none"/>
<polygon points="603.6,129.6 608.1,121.5 624.3,121 628.8,129.6 629.7,144 603.6,144"/>
<rect x="609" y="122" width="2" height="2" fill="#f0f0f0"/>
<rect x="609" y="128" width="2" height="2" fill="#f0f0f0"/>
<rect x="612" y="125" width="2" height="2" fill="#f0f0f0"/>
<rect x="612" y="131" width="2" height="2" fill="#f0f0f0"/>
<rect x="615" y="122" width="2" height="2" fill="#f0f0f0"/>
<rect x="615" y="128" width="2" height="2" fill="#f0f0f0"/>
<rect x="618" y="125" width="2" height="2" fill="#f0f0f0"/>
<rect x="618" y="131" width="2" height="2" fill="#f0f0f0"/>
<rect x="621" y="122" width="2" height="2" fill="#f0f0f0"/>
<rect x="621" y="128" width="2" height="2" fill="#f0f0f0"/>
<rect x="619" y="126" width="6" height="2" fill="#f0f0f0"/>
<rect x="652" y="120" width="20" height="3"/><rect x="652" y="133" width="20" height="3"/><rect x="671" y="121" width="4" height="14"/>
<rect x="655" y="117" width="4" height="9"/><rect x="655" y="129" width="4" height="13"/><rect x="652" y="131" width="3" height="8"/>
<polygon points="714.5,118.5 725.5,129.6 714.5,141 703.5,129.6"/>
<rect x="712" y="115" width="2" height="6"/><rect x="698" y="128" width="3" height="16"/><polygon points="698,130 704,124 706,127 701,132"/>
<rect x="697" y="143" width="29" height="3"/>
<polygon points="716,124 721,129 719,131 718,128" fill="#f0f0f0"/>
<polygon points="765.8,118.5 777,129.6 765.8,141 754.8,129.6"/>
<rect x="763" y="116" width="2" height="5"/>
<polygon points="750,131 756,125 758,127 752,133"/>
<rect x="749" y="133" width="8" height="2"/><rect x="747" y="137" width="11" height="2"/><rect x="745" y="141" width="15" height="2"/><rect x="745" y="145" width="18" height="2"/>
</g>
<defs><linearGradient id="gA" x1="0" y1="0" x2="1" y2="1"><stop offset="0" stop-color="#9aa7b6"/><stop offset="1" stop-color="#66778a"/></linearGradient><linearGradient id="gB" x1="0" y1="0" x2="1" y2="0"><stop offset="0" stop-color="#d9dfe6"/><stop offset="1" stop-color="#8796a8"/></linearGradient><radialGradient id="gC" cx="0.35" cy="0.3" r="0.8"><stop offset="0" stop-color="#8d9bab"/><stop offset="1" stop-color="#4f6073"/></radialGradient><radialGradient id="gD" cx="0.4" cy="0.4" r="0.7"><stop offset="0" stop-color="#eef1f5"/><stop offset="1" stop-color="#aab5c2"/></radialGradient></defs>
<rect x="2" y="682" width="47" height="1" fill="#a0a0a0"/>
<rect x="13" y="200" width="25" height="2" fill="#93a3b6" opacity=".8"/>
<polygon points="13.5,172.5 32.5,190.3 25.4,191 28.5,197.7 24.2,200.5 20.6,194.1 13.8,198.3" fill="url(#gA)" stroke="#27303c" stroke-width="1.2" stroke-linejoin="round"/>
<rect x="9" y="243" width="25" height="2" fill="#93a3b6" opacity=".8"/>
<path d="M9 228.5 L13 227.5 L37 231.5 L37 233 L10 232 Z" fill="#b8c2cd" stroke="#27303c" stroke-width=".9"/>
<path d="M33 221.5 L35 223.5 L15 242 L12 240.5 Z" fill="#9ba8b7" stroke="#27303c" stroke-width=".9"/>
<ellipse cx="12.5" cy="241" rx="3.3" ry="2.6" fill="#c9d0d9" stroke="#27303c" stroke-width="1.7"/>
<path d="M9 228 C9 225.5 14 225.5 14.5 227.5" fill="none" stroke="#27303c" stroke-width="1.5"/>
<rect x="28" y="230.5" width="7" height="1.5" fill="#e9edf1"/>
<path d="M22.4 262 L25.5 270 L26.5 277 L30.9 293.5 L28 285 L24.5 277.5 L20 277.5 L16 284 L13.3 289.5 L17 277 L19 270 Z" fill="#4a5868" stroke="#27303c" stroke-width=".8"/>
<rect x="19.3" y="269" width="6" height="7.5" rx="1" fill="url(#gB)" stroke="#27303c" stroke-width=".7"/>
<rect x="6.5" y="336" width="31" height="1.6" fill="#47566a"/>
<path d="M21.8 307.5 L36.5 336.5 L28 336.5 L25 329 L15.5 329 L12.5 336.5 L7.5 336.5 Z M17 325.5 L24 325.5 L20.8 316.5 Z" fill="url(#gB)" fill-rule="evenodd" stroke="#55657a" stroke-width=".9"/>
<path d="M21.8 307.8 L36.3 336.3 L31.5 336.3 L20.5 313 Z" fill="#5d6d80"/>
<polygon points="34.5,325 37.6,327.6 34.5,330.2" fill="#000"/>
<rect x="5" y="378.5" width="22" height="3" fill="#93a3b6" opacity=".75"/>
<path d="M23.2 372 L32.5 380.6" stroke="#4e5e71" stroke-width="4.4" stroke-linecap="round"/>
<path d="M23.8 372.2 L32 379.8" stroke="#8b9aab" stroke-width="1.6" stroke-linecap="round"/>
<circle cx="15.7" cy="364.2" r="9.6" fill="#e9edf1" stroke="#27303c" stroke-width="1.5" stroke-dasharray="4.2 1.4"/>
<circle cx="15.7" cy="364.2" r="6.3" fill="url(#gD)" stroke="#27303c" stroke-width="1.3" stroke-dasharray="3.2 1.6"/>
<polygon points="32.8,369 35.8,372.4 32.8,375.8" fill="#000"/>
<rect x="10" y="423.5" width="26" height="3" fill="#93a3b6" opacity=".8"/>
<circle cx="28.4" cy="416.9" r="8.7" fill="url(#gC)" stroke="#27303c" stroke-width="1"/>
<circle cx="16.9" cy="409.6" r="8.7" fill="url(#gC)" stroke="#27303c" stroke-width="1"/>
<polygon points="35.6,424.6 38.8,427.2 35.6,429.8" fill="#000"/>
<rect x="18" y="470.5" width="17" height="2" fill="#93a3b6" opacity=".8"/>
<rect x="20" y="450" width="15.2" height="14" fill="#5b6c80" stroke="#3a4858" stroke-width=".8"/>
<rect x="23" y="452.5" width="9" height="3" fill="#74859a"/>
<polygon points="26,459.5 32.8,470 19.2,470" fill="#8a98a8" stroke="#4a5868" stroke-width=".8"/>
<circle cx="15.1" cy="460.3" r="5.9" fill="url(#gD)" stroke="#27303c" stroke-width="1.1"/>
<polygon points="35.2,470.4 38.8,473 35.2,475.6" fill="#000"/>
<rect x="11" y="516" width="24" height="3.6" fill="#93a3b6" opacity=".8"/>
<polygon points="32.8,491.8 36,500 21,514.5 11,519.8 14.5,509.5" fill="#e6eaef" stroke="#7a8899" stroke-width=".8"/>
<polygon points="34.5,496 36,500 21,514.5 19.5,511" fill="#93a1b2"/>
<polygon points="14.5,509.5 21,514.5 11,519.8" fill="#7b8a9c"/>
<polygon points="11,519.8 13,516.5 15,518.2" fill="#000"/>
<polygon points="35.8,516.4 39.3,519 35.8,521.6" fill="#000"/>
<polygon points="24.8,543.6 36.9,556.3 24.8,563.6 13.3,553.3" fill="#8897a9" stroke="#27303c" stroke-width="1" stroke-dasharray="5 2"/>
<polygon points="24.8,545 30,551 24.8,556 19,551" fill="#a9b5c3"/>
<polygon points="24.8,556 36,556.5 24.8,563" fill="#607084"/>
<path d="M8.5 544 L14 544 L18.5 551 L20 555 L9 553.5 Z" fill="#92a1b3"/>
<rect x="9" y="549.5" width="9" height="1.5" fill="#6b7b8e"/>
<rect x="16" y="563" width="16" height="2.5" fill="#93a3b6" opacity=".7"/>
<polygon points="35.2,562.4 38.8,565 35.2,567.6" fill="#000"/>
<rect x="16" y="607.5" width="20" height="3" fill="#93a3b6" opacity=".8"/>
<rect x="8.5" y="609.5" width="7.5" height="1.6" fill="#000"/>
<path d="M15 608.5 C14 600 18 597 24 596.5 L29 603 C28 607 24 609 19 609.5 Z" fill="url(#gD)" stroke="#27303c" stroke-width="1"/>
<path d="M17 608 C19 604 21.5 602.5 24.5 602" stroke="#27303c" stroke-width=".9" fill="none"/>
<polygon points="24,596 31,586.5 33.5,588 34,598 30,603" fill="#3f4d5d"/>
<polygon points="25.5,596.5 29,599.5 28,602 24.5,598.5" fill="#0c1016"/>
<path d="M31 584.5 L24 594" stroke="#27303c" stroke-width="1"/>
<rect x="30" y="583.5" width="3" height="2" fill="#586779"/>
<polygon points="36,608.4 39.8,611 36,613.6" fill="#000"/>
<rect x="12" y="654.5" width="24" height="3" fill="#93a3b6" opacity=".8"/>
<polygon points="27.5,632 38.5,641.5 26,656 15,646.5" fill="url(#gB)" stroke="#27303c" stroke-width="1.1" stroke-linejoin="round"/>
<polygon points="24,637 34,645.5 32,648 22,639.5" fill="#f4f6f8" opacity=".8"/>
<polygon points="19.5,643 29,651 27.5,653 18,645" fill="#7f8ea0" opacity=".8"/>
<path d="M17 648 L10.5 654.5" stroke="#27303c" stroke-width="5.2" stroke-linecap="round"/>
<path d="M16.6 648.6 L10.9 654.2" stroke="#8b99aa" stroke-width="2.6" stroke-linecap="round"/>
<polygon points="35.4,654.4 39,657 35.4,659.6" fill="#000"/>
<g shape-rendering="crispEdges">
<rect x="14.5" y="37.5" width="14" height="14" fill="#e4e4e4" stroke="#8c8c8c" stroke-width="1"/>
<rect x="16" y="39" width="1" height="1" fill="#f8f8f8"/>
<rect x="16" y="43" width="1" height="1" fill="#f8f8f8"/>
<rect x="16" y="47" width="1" height="1" fill="#f8f8f8"/>
<rect x="18" y="41" width="1" height="1" fill="#f8f8f8"/>
<rect x="18" y="45" width="1" height="1" fill="#f8f8f8"/>
<rect x="18" y="49" width="1" height="1" fill="#f8f8f8"/>
<rect x="20" y="39" width="1" height="1" fill="#f8f8f8"/>
<rect x="20" y="43" width="1" height="1" fill="#f8f8f8"/>
<rect x="20" y="47" width="1" height="1" fill="#f8f8f8"/>
<rect x="22" y="41" width="1" height="1" fill="#f8f8f8"/>
<rect x="22" y="45" width="1" height="1" fill="#f8f8f8"/>
<rect x="22" y="49" width="1" height="1" fill="#f8f8f8"/>
<rect x="24" y="39" width="1" height="1" fill="#f8f8f8"/>
<rect x="24" y="43" width="1" height="1" fill="#f8f8f8"/>
<rect x="24" y="47" width="1" height="1" fill="#f8f8f8"/>
<rect x="26" y="41" width="1" height="1" fill="#f8f8f8"/>
<rect x="26" y="45" width="1" height="1" fill="#f8f8f8"/>
<rect x="26" y="49" width="1" height="1" fill="#f8f8f8"/>
<rect x="16" y="44" width="11" height="1" fill="#000"/>
<polygon points="15.5,44.5 19,42.0 19,47.0" fill="#000"/>
<polygon points="27.5,44.5 24,42.0 24,47.0" fill="#000"/>
<rect x="14.5" y="67.5" width="14" height="14" fill="#e4e4e4" stroke="#8c8c8c" stroke-width="1"/>
<rect x="16" y="69" width="1" height="1" fill="#f8f8f8"/>
<rect x="16" y="73" width="1" height="1" fill="#f8f8f8"/>
<rect x="16" y="77" width="1" height="1" fill="#f8f8f8"/>
<rect x="18" y="71" width="1" height="1" fill="#f8f8f8"/>
<rect x="18" y="75" width="1" height="1" fill="#f8f8f8"/>
<rect x="18" y="79" width="1" height="1" fill="#f8f8f8"/>
<rect x="20" y="69" width="1" height="1" fill="#f8f8f8"/>
<rect x="20" y="73" width="1" height="1" fill="#f8f8f8"/>
<rect x="20" y="77" width="1" height="1" fill="#f8f8f8"/>
<rect x="22" y="71" width="1" height="1" fill="#f8f8f8"/>
<rect x="22" y="75" width="1" height="1" fill="#f8f8f8"/>
<rect x="22" y="79" width="1" height="1" fill="#f8f8f8"/>
<rect x="24" y="69" width="1" height="1" fill="#f8f8f8"/>
<rect x="24" y="73" width="1" height="1" fill="#f8f8f8"/>
<rect x="24" y="77" width="1" height="1" fill="#f8f8f8"/>
<rect x="26" y="71" width="1" height="1" fill="#f8f8f8"/>
<rect x="26" y="75" width="1" height="1" fill="#f8f8f8"/>
<rect x="26" y="79" width="1" height="1" fill="#f8f8f8"/>
<rect x="21" y="69" width="1" height="11" fill="#000"/>
<polygon points="21.5,68.5 19,72.0 24,72.0" fill="#000"/>
<polygon points="21.5,80.5 19,77.0 24,77.0" fill="#000"/>
<rect x="331" y="51" width="18" height="18" fill="#f4ffff"/>
<rect x="333" y="53" width="14" height="14" fill="#fff"/>
<rect x="335" y="55" width="11" height="11" fill="#00008b"/>
<rect x="336" y="56" width="9" height="9" fill="#00ffff"/>
<rect x="332" y="52" width="1" height="16" fill="#ff0000"/>
<rect x="337" y="52" width="1" height="16" fill="#ff0000"/>
<rect x="342" y="52" width="1" height="16" fill="#ff0000"/>
<rect x="347" y="52" width="1" height="16" fill="#ff0000"/>
<rect x="332" y="52" width="16" height="1" fill="#ff0000"/>
<rect x="332" y="57" width="16" height="1" fill="#ff0000"/>
<rect x="332" y="62" width="16" height="1" fill="#ff0000"/>
<rect x="332" y="67" width="16" height="1" fill="#ff0000"/>
<rect x="757.5" y="54.5" width="15" height="15" fill="none" stroke="#ff0000" stroke-width="1" stroke-dasharray="1 1"/>
<rect x="760" y="57" width="11" height="11" fill="#00008b"/>
<rect x="761" y="58" width="9" height="9" fill="#00ffff"/>
<rect x="52" y="158" width="16" height="6" fill="#000"/><rect x="52" y="158" width="6" height="15" fill="#000"/>
<rect x="53" y="159" width="4" height="4" fill="#00e0e0"/><rect x="58" y="159" width="9" height="4" fill="#00e0e0"/><rect x="53" y="164" width="4" height="8" fill="#00e0e0"/>
<rect x="54" y="160" width="1" height="1" fill="#fff"/>
<rect x="56" y="162" width="1" height="1" fill="#fff"/>
<rect x="59" y="160" width="1" height="1" fill="#fff"/>
<rect x="61" y="161" width="1" height="1" fill="#fff"/>
<rect x="63" y="160" width="1" height="1" fill="#fff"/>
<rect x="65" y="161" width="1" height="1" fill="#fff"/>
<rect x="54" y="165" width="1" height="1" fill="#fff"/>
<rect x="55" y="167" width="1" height="1" fill="#fff"/>
<rect x="54" y="169" width="1" height="1" fill="#fff"/>
<rect x="55" y="171" width="1" height="1" fill="#fff"/>
<rect x="60" y="162" width="1" height="1" fill="#fff"/>
<rect x="64" y="162" width="1" height="1" fill="#fff"/>
<rect x="58" y="164" width="3" height="3" fill="#d8d8d8"/>
<rect x="62" y="166" width="6" height="1" fill="#ff0000"/><polygon points="61.5,166.5 64,164.5 64,168.5" fill="#ff0000"/>
<rect x="60" y="168" width="1" height="6" fill="#ff0000"/><polygon points="60.5,167.5 58.5,170 62.5,170" fill="#ff0000"/>
</g>
</svg>
</div></body></html>
